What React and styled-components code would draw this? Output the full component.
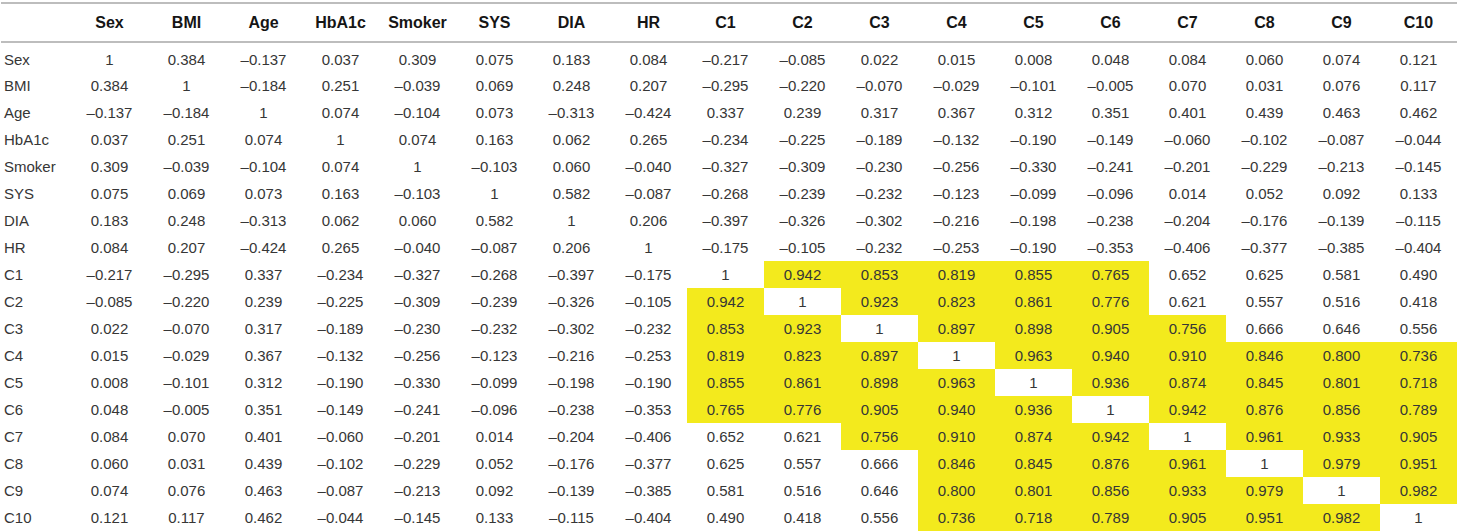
import styled, { createGlobalStyle } from "styled-components";

const GlobalStyle = createGlobalStyle`
  body {
    margin: 0;
    background: #fff;
    font-family: "Liberation Sans", Arial, sans-serif;
  }
`;

const Wrapper = styled.div`
  padding: 2px 2px 0 1px;
`;

const Table = styled.table`
  width: 1456px;
  border-collapse: collapse;
  table-layout: fixed;
  border-top: 2px solid #bdbdbd;
`;

const HeadRow = styled.tr`
  height: 39px;
  border-bottom: 2px solid #bdbdbd;
`;

const HeadCell = styled.th`
  font-size: 16px;
  font-weight: 700;
  color: #151515;
  text-align: center;
  padding: 0;
`;

const Row = styled.tr`
  height: 27px;

  &:first-child {
    height: 30px;
  }
  &:first-child > td {
    padding-top: 3px;
  }
`;

const LabelCell = styled.td`
  font-size: 15px;
  color: #363636;
  text-align: left;
  padding: 0 0 0 3px;
  white-space: nowrap;
`;

const ValueCell = styled.td`
  font-size: 15px;
  color: #363636;
  text-align: center;
  padding: 0;
  white-space: nowrap;
  background: ${(p) => (p.$hot ? "#f3ea1d" : "transparent")};
`;

const labels = ["Sex", "BMI", "Age", "HbA1c", "Smoker", "SYS", "DIA", "HR", "C1", "C2", "C3", "C4", "C5", "C6", "C7", "C8", "C9", "C10"];

const rows = [
  "1 0.384 -0.137 0.037 0.309 0.075 0.183 0.084 -0.217 -0.085 0.022 0.015 0.008 0.048 0.084 0.060 0.074 0.121",
  "0.384 1 -0.184 0.251 -0.039 0.069 0.248 0.207 -0.295 -0.220 -0.070 -0.029 -0.101 -0.005 0.070 0.031 0.076 0.117",
  "-0.137 -0.184 1 0.074 -0.104 0.073 -0.313 -0.424 0.337 0.239 0.317 0.367 0.312 0.351 0.401 0.439 0.463 0.462",
  "0.037 0.251 0.074 1 0.074 0.163 0.062 0.265 -0.234 -0.225 -0.189 -0.132 -0.190 -0.149 -0.060 -0.102 -0.087 -0.044",
  "0.309 -0.039 -0.104 0.074 1 -0.103 0.060 -0.040 -0.327 -0.309 -0.230 -0.256 -0.330 -0.241 -0.201 -0.229 -0.213 -0.145",
  "0.075 0.069 0.073 0.163 -0.103 1 0.582 -0.087 -0.268 -0.239 -0.232 -0.123 -0.099 -0.096 0.014 0.052 0.092 0.133",
  "0.183 0.248 -0.313 0.062 0.060 0.582 1 0.206 -0.397 -0.326 -0.302 -0.216 -0.198 -0.238 -0.204 -0.176 -0.139 -0.115",
  "0.084 0.207 -0.424 0.265 -0.040 -0.087 0.206 1 -0.175 -0.105 -0.232 -0.253 -0.190 -0.353 -0.406 -0.377 -0.385 -0.404",
  "-0.217 -0.295 0.337 -0.234 -0.327 -0.268 -0.397 -0.175 1 0.942 0.853 0.819 0.855 0.765 0.652 0.625 0.581 0.490",
  "-0.085 -0.220 0.239 -0.225 -0.309 -0.239 -0.326 -0.105 0.942 1 0.923 0.823 0.861 0.776 0.621 0.557 0.516 0.418",
  "0.022 -0.070 0.317 -0.189 -0.230 -0.232 -0.302 -0.232 0.853 0.923 1 0.897 0.898 0.905 0.756 0.666 0.646 0.556",
  "0.015 -0.029 0.367 -0.132 -0.256 -0.123 -0.216 -0.253 0.819 0.823 0.897 1 0.963 0.940 0.910 0.846 0.800 0.736",
  "0.008 -0.101 0.312 -0.190 -0.330 -0.099 -0.198 -0.190 0.855 0.861 0.898 0.963 1 0.936 0.874 0.845 0.801 0.718",
  "0.048 -0.005 0.351 -0.149 -0.241 -0.096 -0.238 -0.353 0.765 0.776 0.905 0.940 0.936 1 0.942 0.876 0.856 0.789",
  "0.084 0.070 0.401 -0.060 -0.201 0.014 -0.204 -0.406 0.652 0.621 0.756 0.910 0.874 0.942 1 0.961 0.933 0.905",
  "0.060 0.031 0.439 -0.102 -0.229 0.052 -0.176 -0.377 0.625 0.557 0.666 0.846 0.845 0.876 0.961 1 0.979 0.951",
  "0.074 0.076 0.463 -0.087 -0.213 0.092 -0.139 -0.385 0.581 0.516 0.646 0.800 0.801 0.856 0.933 0.979 1 0.982",
  "0.121 0.117 0.462 -0.044 -0.145 0.133 -0.115 -0.404 0.490 0.418 0.556 0.736 0.718 0.789 0.905 0.951 0.982 1",
].map((r) => r.split(" "));

// strong correlations (>= 0.7, off-diagonal) are highlighted
const isHot = (v) => {
  const n = parseFloat(v);
  return n >= 0.7 && n !== 1;
};

const fmt = (v) => v.replace("-", "\u2013");

export default function App() {
  return (
    <>
      <GlobalStyle />
      <Wrapper>
        <Table>
          <colgroup>
            <col style={{ width: 70 }} />
            {labels.map((l) => (
              <col key={l} style={{ width: 77 }} />
            ))}
          </colgroup>
          <thead>
            <HeadRow>
              <HeadCell />
              {labels.map((l) => (
                <HeadCell key={l}>{l}</HeadCell>
              ))}
            </HeadRow>
          </thead>
          <tbody>
            {rows.map((r, i) => (
              <Row key={labels[i]}>
                <LabelCell>{labels[i]}</LabelCell>
                {r.map((v, j) => (
                  <ValueCell key={j} $hot={isHot(v)}>
                    {fmt(v)}
                  </ValueCell>
                ))}
              </Row>
            ))}
          </tbody>
        </Table>
      </Wrapper>
    </>
  );
}
